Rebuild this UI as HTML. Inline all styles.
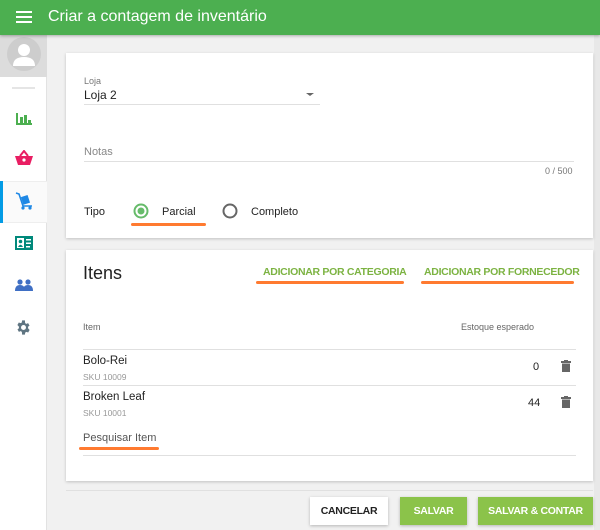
<!DOCTYPE html>
<html><head><meta charset="utf-8">
<style>
*{margin:0;padding:0;box-sizing:border-box}
body{width:600px;height:530px;overflow:hidden;background:#f1f1f1;font-family:"Liberation Sans",Arial,sans-serif;position:relative;color:#222}
.abs{position:absolute;white-space:nowrap}
.hdr{left:0;top:0;width:600px;height:35px;background:#4caf50;box-shadow:0 1px 3px rgba(0,0,0,.3);z-index:2}
.hdr .t{left:48px;top:8px;color:#fff;font-size:16px}
.side{left:0;top:35px;width:47px;height:495px;background:#fff;border-right:1px solid #e2e2e2}
.card{background:#fff;box-shadow:0 1px 3px rgba(0,0,0,.2)}
.or{background:#ff7a30;height:3px;border-radius:2px}
.line{background:#e0e0e0;height:1px}
.s11{font-size:11px}
.g{color:#777}
.btn{height:28px;font-size:10.5px;font-weight:bold;text-align:center;line-height:28px;box-shadow:0 1px 3px rgba(0,0,0,.25);letter-spacing:-0.3px}
.grn{color:#7cb342;font-size:10.5px;font-weight:bold;letter-spacing:-0.3px}
</style></head><body>
<div class="abs hdr">
 <svg class="abs" style="left:16px;top:11px" width="16" height="12"><rect y="0" width="16" height="2" fill="#fff"/><rect y="5" width="16" height="2" fill="#fff"/><rect y="10" width="16" height="2" fill="#fff"/></svg>
 <div class="abs t">Criar a contagem de inventário</div>
</div>
<div class="abs side">
 <div class="abs" style="left:0;top:0;width:47px;height:42px;background:#dcdcdc;overflow:hidden">
  <svg width="47" height="42"><circle cx="24" cy="19" r="17" fill="#cdcdcd"/><circle cx="24" cy="15" r="6" fill="#fff"/><path d="M13 31 Q13 22 24 22 Q35 22 35 31Z" fill="#fff"/></svg>
 </div>
 <div class="abs" style="left:12px;top:52px;width:23px;height:2px;background:#e5e5e5"></div>
 <svg class="abs" style="left:16px;top:76px" width="16" height="14"><rect x="0" y="2" width="2" height="12" fill="#4caf50"/><rect x="4" y="6" width="3" height="8" fill="#4caf50"/><rect x="8" y="4" width="3" height="10" fill="#4caf50"/><rect x="12" y="9" width="3" height="5" fill="#4caf50"/><rect x="0" y="12" width="16" height="2" fill="#4caf50"/></svg>
 <svg class="abs" style="left:15px;top:115px" width="18" height="15"><path d="M5 6 L9 1 L13 6" stroke="#e91e63" stroke-width="2" fill="none"/><path d="M0 6 H18 L15 15 H3Z" fill="#e91e63"/><circle cx="9" cy="10" r="1.6" fill="#fff"/></svg>
 <div class="abs" style="left:0;top:146px;width:47px;height:42px;background:#fafafa;border-top:1px solid #eee;border-bottom:1px solid #eee"></div>
 <div class="abs" style="left:0;top:146px;width:3px;height:42px;background:#039be5"></div>
 <svg class="abs" style="left:15px;top:157px" width="18" height="19"><path d="M1 1 L4 2 L8 14 H17" stroke="#1e88e5" stroke-width="1.6" fill="none"/><rect x="7" y="4" width="7" height="8" fill="#1e88e5" transform="rotate(-18 10 8)"/><circle cx="8" cy="16" r="1.6" fill="#1e88e5"/><circle cx="15" cy="16" r="1.6" fill="#1e88e5"/></svg>
 <svg class="abs" style="left:15px;top:201px" width="18" height="14"><rect width="18" height="14" fill="#00897b"/><rect x="2" y="2" width="7" height="10" fill="#fff"/><circle cx="5.5" cy="5.5" r="1.8" fill="#00897b"/><path d="M3 11 Q5.5 6.5 8 11Z" fill="#00897b"/><rect x="11" y="3" width="5" height="1.5" fill="#fff"/><rect x="11" y="6.5" width="5" height="1.5" fill="#fff"/><rect x="11" y="10" width="4" height="1.5" fill="#fff"/></svg>
 <svg class="abs" style="left:15px;top:244px" width="18" height="12"><circle cx="5" cy="3" r="2.6" fill="#3f6fc4"/><circle cx="13" cy="3" r="2.6" fill="#3f6fc4"/><path d="M0 12 Q0 6 5 6 Q10 6 10 12Z" fill="#3f6fc4"/><path d="M8 12 Q8 6 13 6 Q18 6 18 12Z" fill="#3f6fc4"/></svg>
 <svg class="abs" style="left:15px;top:284px" width="17" height="17" viewBox="0 0 24 24"><path fill="#5f7582" d="M19.4 13a7.5 7.5 0 000-2l2.1-1.6-2-3.5-2.5 1a7.3 7.3 0 00-1.7-1L15 2h-4l-.4 2.9a7.3 7.3 0 00-1.7 1l-2.5-1-2 3.5L6.6 11a7.5 7.5 0 000 2l-2.1 1.6 2 3.5 2.5-1c.5.4 1.1.7 1.7 1L11 22h4l.4-2.9c.6-.3 1.2-.6 1.7-1l2.5 1 2-3.5zM13 15.5a3.5 3.5 0 110-7 3.5 3.5 0 010 7z" transform="translate(-1 0)"/></svg>
</div>
<div class="abs" style="left:594px;top:35px;width:6px;height:495px;background:#e8e8e8"></div>

<div class="abs card" style="left:66px;top:53px;width:527px;height:185px">
 <div class="abs g" style="left:18px;top:23px;font-size:9px">Loja</div>
 <div class="abs" style="left:18px;top:35px;font-size:12px">Loja 2</div>
 <div class="abs" style="left:240px;top:40px;width:0;height:0;border-left:4px solid transparent;border-right:4px solid transparent;border-top:3px solid #666"></div>
 <div class="abs line" style="left:18px;top:51px;width:236px"></div>
 <div class="abs g" style="left:18px;top:93px;font-size:11px;color:#888">Notas</div>
 <div class="abs line" style="left:18px;top:108px;width:490px"></div>
 <div class="abs g" style="left:479px;top:113px;font-size:9px">0 / 500</div>
 <div class="abs s11" style="left:18px;top:153px">Tipo</div>
 <svg class="abs" style="left:67px;top:150px" width="16" height="16"><circle cx="8" cy="8" r="6.5" stroke="#66bb6a" stroke-width="2" fill="none"/><circle cx="8" cy="8" r="3.5" fill="#66bb6a"/></svg>
 <div class="abs s11" style="left:96px;top:153px">Parcial</div>
 <div class="abs or" style="left:65px;top:170px;width:75px"></div>
 <svg class="abs" style="left:156px;top:150px" width="16" height="16"><circle cx="8" cy="8" r="6.5" stroke="#666" stroke-width="2" fill="none"/></svg>
 <div class="abs s11" style="left:185px;top:153px">Completo</div>
</div>

<div class="abs card" style="left:66px;top:250px;width:527px;height:231px">
 <div class="abs" style="left:17px;top:13px;font-size:18px">Itens</div>
 <div class="abs grn" style="left:197px;top:16px">ADICIONAR POR CATEGORIA</div>
 <div class="abs or" style="left:190px;top:31px;width:148px"></div>
 <div class="abs grn" style="left:358px;top:16px">ADICIONAR POR FORNECEDOR</div>
 <div class="abs or" style="left:355px;top:31px;width:153px"></div>
 <div class="abs g" style="left:17px;top:72px;font-size:9px;color:#666">Item</div>
 <div class="abs g" style="left:395px;top:72px;font-size:9px;color:#666">Estoque esperado</div>
 <div class="abs line" style="left:17px;top:99px;width:493px"></div>
 <div class="abs s11" style="left:17px;top:105px;font-size:11.5px">Bolo-Rei</div>
 <div class="abs g" style="left:17px;top:122px;font-size:8.5px;color:#999">SKU 10009</div>
 <div class="abs s11" style="left:467px;top:111px">0</div>
 <svg class="abs" style="left:495px;top:110px" width="10" height="12"><rect x="0" y="1" width="10" height="2" fill="#666"/><rect x="3" y="0" width="4" height="1.5" fill="#666"/><rect x="1" y="3.5" width="8" height="8.5" fill="#666"/></svg>
 <div class="abs line" style="left:17px;top:135px;width:493px"></div>
 <div class="abs s11" style="left:17px;top:141px;font-size:11.5px">Broken Leaf</div>
 <div class="abs g" style="left:17px;top:158px;font-size:8.5px;color:#999">SKU 10001</div>
 <div class="abs s11" style="left:462px;top:147px">44</div>
 <svg class="abs" style="left:495px;top:146px" width="10" height="12"><rect x="0" y="1" width="10" height="2" fill="#666"/><rect x="3" y="0" width="4" height="1.5" fill="#666"/><rect x="1" y="3.5" width="8" height="8.5" fill="#666"/></svg>
 <div class="abs s11" style="left:17px;top:182px;color:#555">Pesquisar Item</div>
 <div class="abs or" style="left:13px;top:197px;width:80px"></div>
 <div class="abs line" style="left:17px;top:205px;width:493px"></div>
</div>
<div class="abs line" style="left:66px;top:490px;width:527px"></div>
<div class="abs btn" style="left:310px;top:497px;width:78px;background:#fff;color:#222">CANCELAR</div>
<div class="abs btn" style="left:400px;top:497px;width:67px;background:#8bc34a;color:#fff">SALVAR</div>
<div class="abs btn" style="left:478px;top:497px;width:115px;background:#8bc34a;color:#fff">SALVAR &amp; CONTAR</div>
</body></html>
